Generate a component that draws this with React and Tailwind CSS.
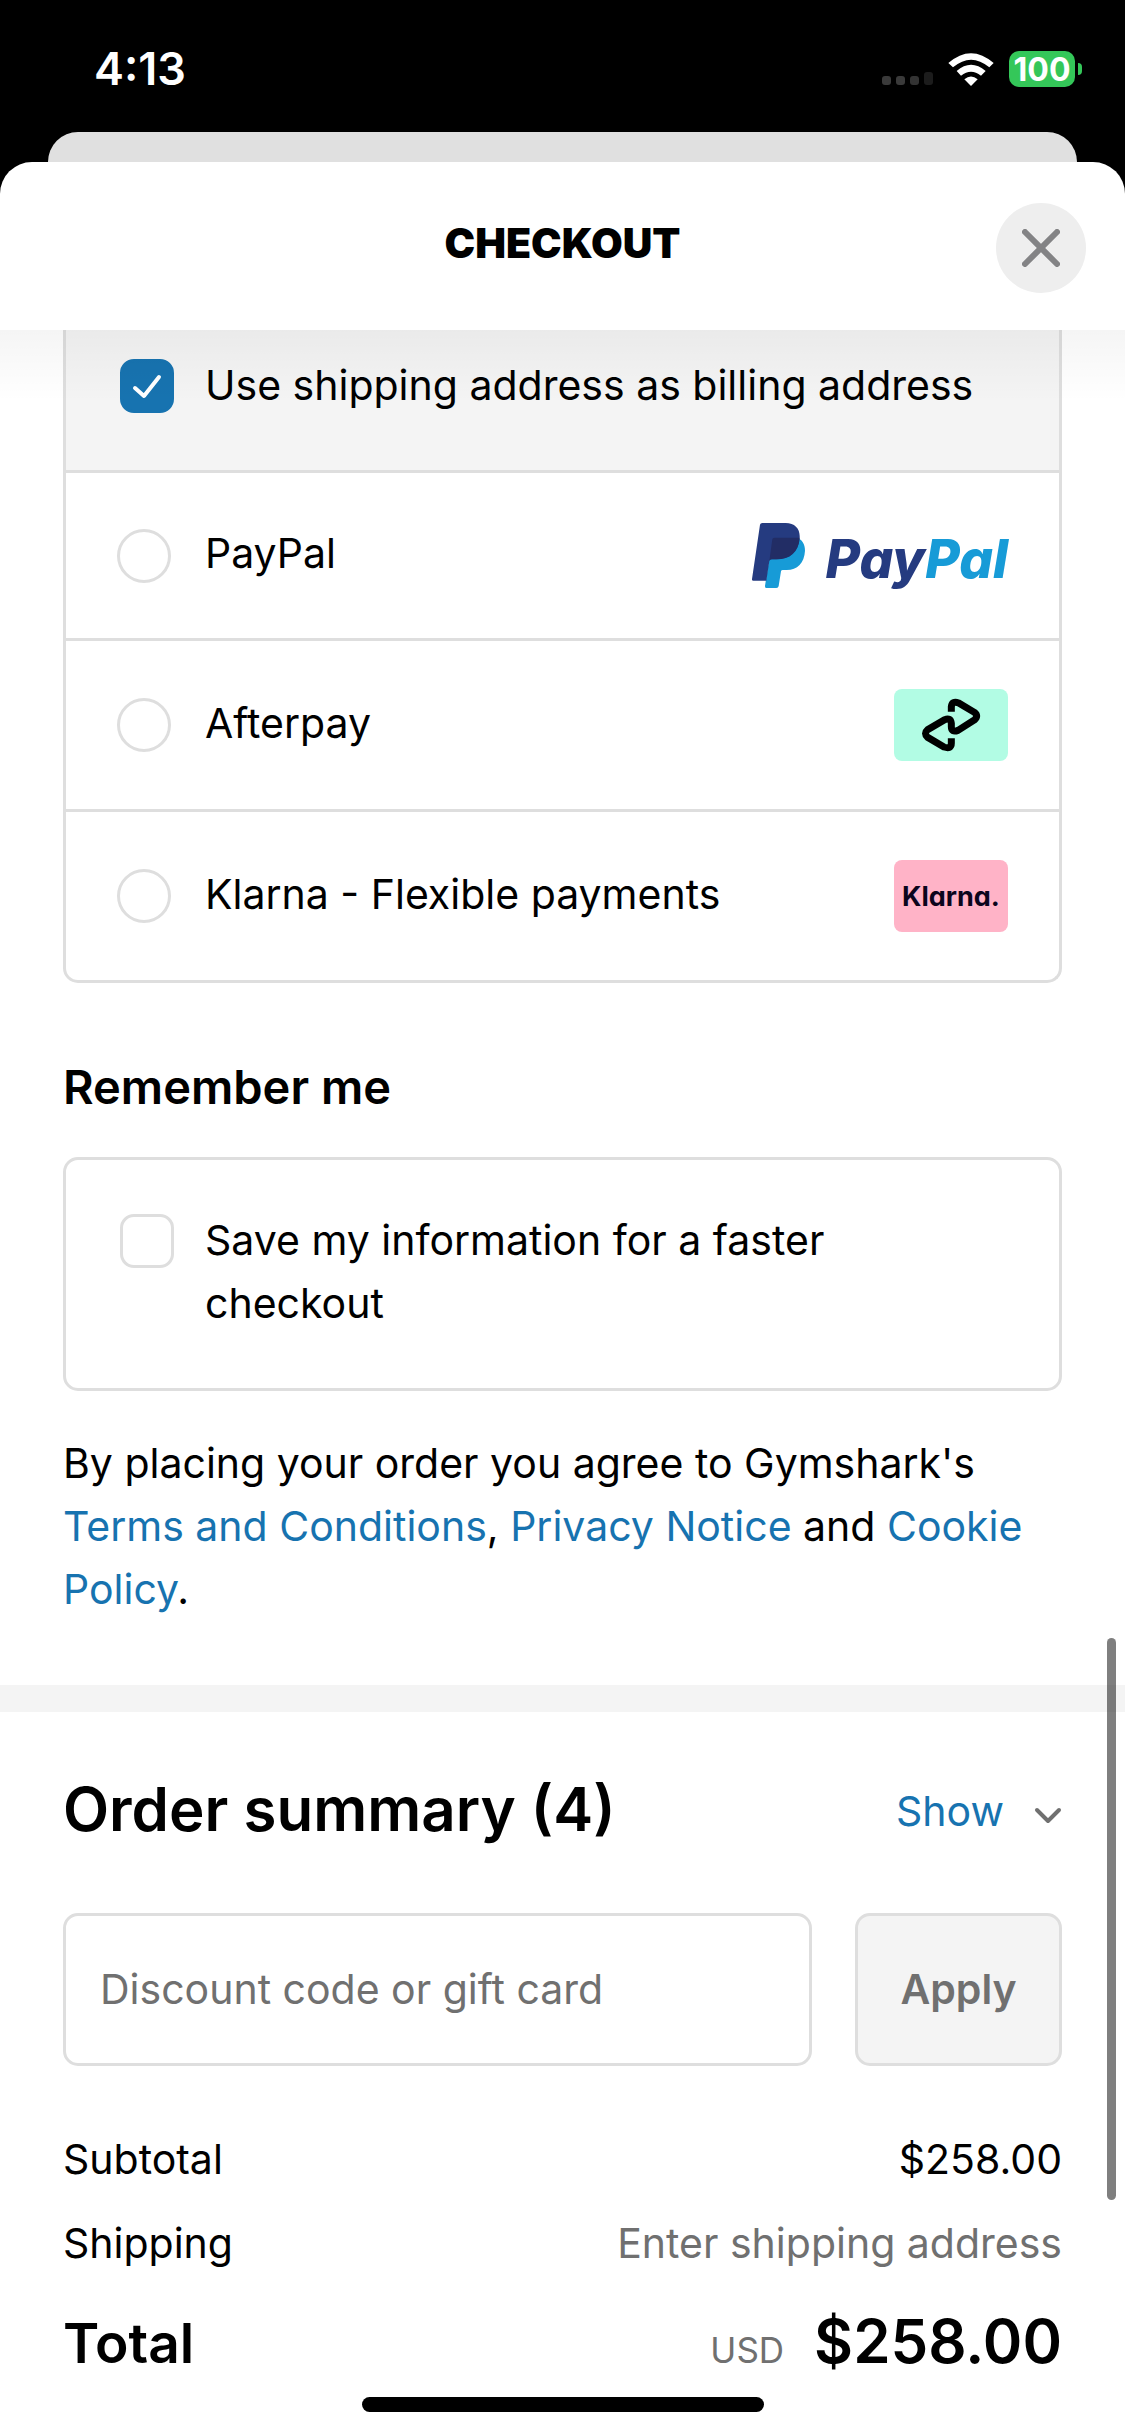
import { useState } from 'react';

const paymentMethods = [
  { id: 'paypal', label: 'PayPal' },
  { id: 'afterpay', label: 'Afterpay' },
  { id: 'klarna', label: 'Klarna - Flexible payments' },
];

const PayPalLogo = () => (
  <span className="flex h-[69px] items-center gap-[20px]">
    <svg viewBox="99 102 159 195" className="h-[65px] w-[53px]" aria-hidden="true">
      <path
        fill="#179bd7"
        d="M166 146H232C250 151 258 165 258 185C256 222 235 243 203 243H191Q187 243 186 247L179 291Q178 297 172 297H142Q137 297 138 291L160 150Z"
      />
      <path
        fill="#253b80"
        d="M130 102H200C228 102 244 120 242 146C239 190 212 211 172 211H158Q152 211 151 216L142 275H103Q98 275 99 270L123 107Q124 102 130 102Z"
      />
      <path
        fill="#222d65"
        d="M166 146H242C239 190 212 211 172 211H158Q152 211 151 216L160 151Q161 146 166 146Z"
      />
    </svg>
    <span className="pt-[8px] text-[53px] leading-[61px] font-extrabold text-[#253b80] italic [font-feature-settings:'cv11']">
      Pay<span className="text-[#179bd7]">Pal</span>
    </span>
  </span>
);

const AfterpayLogo = () => (
  <span className="flex h-[72px] w-[114px] rounded-lg bg-[#b2fce4]">
    <svg viewBox="102 87 342 216" className="h-full w-full" aria-hidden="true">
      <path
        fill="none"
        stroke="#000"
        strokeWidth="21"
        d="M274 155V140Q276 122 296 129L343 157Q357 168 343 180L294 211Q274 218 274 200V190Q272 172 254 179L203 209Q190 220 203 232L252 261Q274 268 274 250V235"
      />
    </svg>
  </span>
);

const KlarnaLogo = () => (
  <span className="flex h-[72px] w-[114px] items-center justify-center rounded-lg bg-[#ffb3c7] text-[27px] font-bold text-[#0b051d] [font-feature-settings:'cv11']">
    Klarna.
  </span>
);

const logos = {
  paypal: <PayPalLogo />,
  afterpay: <AfterpayLogo />,
  klarna: <KlarnaLogo />,
};

const Checkbox = ({ id, checked, onChange }) => (
  <span className="grid h-[63px] shrink-0 items-center">
    <input
      id={id}
      type="checkbox"
      checked={checked}
      onChange={(e) => onChange(e.target.checked)}
      className="col-start-1 row-start-1 size-[54px] appearance-none rounded-[14px] border-[3px] border-[#dedede] bg-white checked:border-[#1773b0] checked:bg-[#1773b0]"
    />
    {checked && (
      <svg viewBox="0 0 54 54" className="pointer-events-none col-start-1 row-start-1 size-[54px]" aria-hidden="true">
        <path
          d="M15 29L24 37L39 18"
          fill="none"
          stroke="#fff"
          strokeWidth="4"
          strokeLinecap="round"
          strokeLinejoin="round"
        />
      </svg>
    )}
  </span>
);

const StatusBar = () => (
  <div className="flex h-[132px] items-start justify-between pt-[42px] pr-[43px] pl-[94px] text-white">
    <span className="text-[45px] leading-[54px] font-semibold">4:13</span>
    <div className="flex h-[54px] items-center">
      {/* Signal */}
      <svg viewBox="0 0 52 36" className="h-[36px] w-[52px]" aria-hidden="true">
        <rect x="0" y="25" width="9" height="9" rx="3" fill="#3a3a3a" />
        <rect x="14" y="25" width="9" height="9" rx="3" fill="#3a3a3a" />
        <rect x="28" y="25" width="9" height="9" rx="3" fill="#333" />
        <rect x="42" y="21" width="9" height="13" rx="3" fill="#1c1c1c" />
      </svg>
      {/* Wifi */}
      <svg viewBox="265 66 136 99" className="ml-[14px] h-[33px] w-[46px]" aria-hidden="true" fill="#fff">
        <path d="M265 96Q333 37 401 96L388 109Q333 63 279 109Z" />
        <path d="M290 120Q333 83 377 120L363 134Q333 110 303 134Z" />
        <path d="M313 145Q333 128 353 145L333 165Z" />
      </svg>
      {/* Battery */}
      <span className="ml-[15px] flex h-[36px] w-[66px] items-center justify-center rounded-[10px] bg-[#34c759] text-[32px] font-bold">
        100
      </span>
      <span className="ml-[3px] h-[12px] w-[4px] rounded-r-full bg-[#34c759]" />
    </div>
  </div>
);

const App = () => {
  const [sameAddress, setSameAddress] = useState(true);
  const [remember, setRemember] = useState(false);
  const [method, setMethod] = useState('');
  const [code, setCode] = useState('');

  return (
    <div className="min-h-screen bg-black font-['Inter',sans-serif] text-[41px] leading-[63px] text-black">
      <StatusBar />
      <div className="mx-[48px] h-[60px] rounded-t-[30px] bg-[#e0e0e0]" />

      <main className="relative -mt-[30px] rounded-t-[32px] bg-white pb-[50px]">
        {/* Header */}
        <header className="relative flex h-[168px] items-center justify-center">
          <h1 className="pb-[6px] text-[41px] font-black">CHECKOUT</h1>
          <button
            type="button"
            aria-label="Close"
            className="absolute top-[41px] right-[39px] flex size-[90px] items-center justify-center rounded-full bg-[#eee]"
          >
            <svg viewBox="0 0 38 38" className="size-[38px]" aria-hidden="true">
              <path d="M3 3L35 35M35 3L3 35" stroke="#838385" strokeWidth="6" strokeLinecap="round" />
            </svg>
          </button>
          <div className="pointer-events-none absolute inset-x-0 top-full z-10 h-[72px] bg-linear-to-b from-black/4 to-transparent" />
        </header>

        {/* Payment */}
        <section className="mx-[63px] overflow-hidden rounded-b-[15px] border-x-[3px] border-b-[3px] border-[#dedede]">
          <div className="flex items-start gap-[31px] bg-[#f4f4f4] pt-[24px] pb-[53px] pl-[54px]">
            <Checkbox id="same-address" checked={sameAddress} onChange={setSameAddress} />
            <label htmlFor="same-address">Use shipping address as billing address</label>
          </div>
          {paymentMethods.map((item) => (
            <div key={item.id} className="flex items-center border-t-[3px] border-[#dedede] px-[51px] py-[48px]">
              <input
                id={item.id}
                type="radio"
                name="payment"
                checked={method === item.id}
                onChange={() => setMethod(item.id)}
                className="size-[54px] appearance-none rounded-full border-[3px] border-[#dedede] checked:border-[16px] checked:border-[#1773b0]"
              />
              <label htmlFor={item.id} className="ml-[34px] flex-1 pb-[4px]">
                {item.label}
              </label>
              {logos[item.id]}
            </div>
          ))}
        </section>

        {/* Remember me */}
        <section className="mx-[63px] mt-[72px]">
          <h2 className="text-[47px] font-semibold">Remember me</h2>
          <div className="mt-[39px] flex items-start gap-[31px] rounded-[15px] border-[3px] border-[#dedede] pt-[49px] pr-[51px] pb-[53px] pl-[54px]">
            <Checkbox id="remember" checked={remember} onChange={setRemember} />
            <label htmlFor="remember" className="max-w-[700px]">
              Save my information for a faster checkout
            </label>
          </div>
          <p className="mt-[41px]">
            By placing your order you agree to Gymshark's{' '}
            <a href="#terms" className="text-[#1773b0]">Terms and Conditions</a>,{' '}
            <a href="#privacy" className="text-[#1773b0]">Privacy Notice</a> and{' '}
            <a href="#cookies" className="text-[#1773b0]">Cookie Policy</a>.
          </p>
        </section>

        <div className="mt-[64px] h-[27px] bg-[#f4f4f4]" />

        {/* Order summary */}
        <section className="mx-[63px] mt-[57px]">
          <div className="flex items-center justify-between">
            <h2 className="text-[60px] leading-[81px] font-semibold">Order summary (4)</h2>
            <button type="button" className="flex items-center gap-[30px] pt-[4px] text-[#1773b0]">
              Show
              <svg viewBox="0 0 28 18" className="mt-[9px] h-[18px] w-[28px]" aria-hidden="true">
                <path
                  d="M3 3L14 14L25 3"
                  fill="none"
                  stroke="#707070"
                  strokeWidth="4"
                  strokeLinecap="round"
                  strokeLinejoin="round"
                />
              </svg>
            </button>
          </div>

          <form className="mt-[63px] flex h-[153px] gap-[43px]" onSubmit={(e) => e.preventDefault()}>
            <input
              type="text"
              aria-label="Discount code or gift card"
              placeholder="Discount code or gift card"
              value={code}
              onChange={(e) => setCode(e.target.value)}
              className="min-w-0 flex-1 rounded-[15px] border-[3px] border-[#dedede] px-[34px] placeholder:text-[#707070]"
            />
            <button
              type="submit"
              className="w-[207px] rounded-[15px] border-[3px] border-[#dedede] bg-[#f4f4f4] font-semibold text-[#707070]"
            >
              Apply
            </button>
          </form>

          <dl className="mt-[62px]">
            <div className="flex justify-between">
              <dt>Subtotal</dt>
              <dd>$258.00</dd>
            </div>
            <div className="mt-[21px] flex justify-between">
              <dt>Shipping</dt>
              <dd className="text-[#707070]">Enter shipping address</dd>
            </div>
            <div className="mt-[26px] flex items-baseline justify-between leading-[81px] font-semibold">
              <dt className="text-[55px]">Total</dt>
              <dd className="flex items-baseline gap-[30px] text-[60px]">
                <span className="text-[35px] font-normal text-[#707070]">USD</span>
                $258.00
              </dd>
            </div>
          </dl>
        </section>
      </main>

      {/* Scroll thumb and home indicator */}
      <div className="fixed top-[1638px] right-[9px] h-[562px] w-[9px] rounded-full bg-black/50" />
      <div className="fixed bottom-[24px] left-1/2 h-[15px] w-[402px] -translate-x-1/2 rounded-full bg-black" />
    </div>
  );
};

export default App;
